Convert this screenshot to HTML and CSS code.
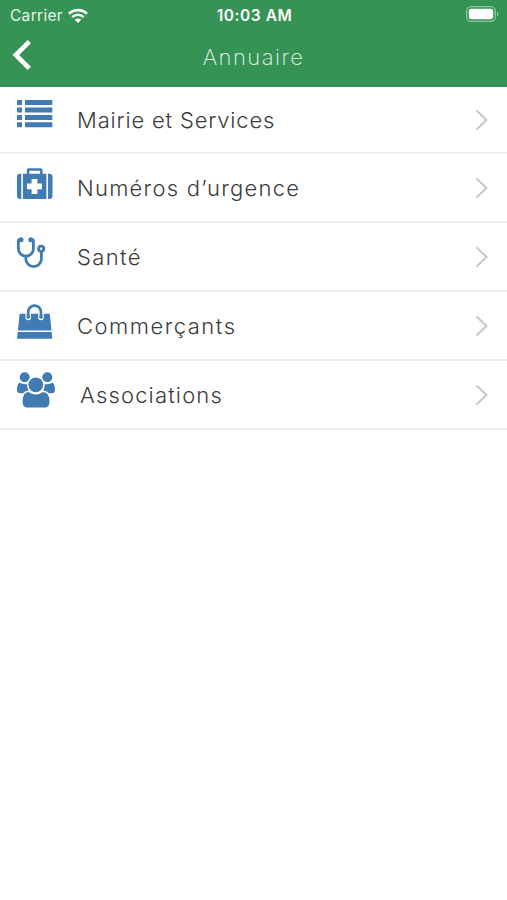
FILE: index.html
```html
<!DOCTYPE html>
<html lang="fr">
<head>
  <meta charset="UTF-8" />
  <meta name="viewport" content="width=device-width, initial-scale=1.0" />
  <title>Annuaire</title>
  <link rel="stylesheet" href="styles.css">
</head>
<body>
  <header>
    <div class="status">
      <div class="carrier">
        <span>Carrier</span>
        <svg class="wifi" width="20" height="15" viewBox="0 0 20 15" fill="none" stroke="#fff" stroke-width="2.6">
          <path d="M1 5.7a13 13 0 0 1 18 0"/>
          <path d="M4.3 9.1a8.2 8.2 0 0 1 11.4 0"/>
          <path d="M10 14.9l-3.2-3.2a4.6 4.6 0 0 1 6.4 0z" fill="#fff" stroke="none"/>
        </svg>
      </div>
      <div class="time">10:03 AM</div>
      <svg class="battery" width="33" height="16" viewBox="0 0 33 16">
        <rect x=".7" y=".7" width="28.6" height="14.6" rx="4.5" fill="none" stroke="#8fc6a1" stroke-width="1.3"/>
        <rect x="2.8" y="2.8" width="24.4" height="10.4" rx="2.4" fill="#fff"/>
        <path d="M31 5.6v4.8a2.7 2.7 0 0 0 0-4.8z" fill="#8fc6a1"/>
      </svg>
    </div>
    <nav>
      <a class="back" href="#">
        <svg width="20" height="30" viewBox="0 0 20 30" fill="none" stroke="#fff" stroke-width="4.6">
          <path d="M17.3 1.7L3.8 15l13.5 13.3"/>
        </svg>
      </a>
      <h1>Annuaire</h1>
    </nav>
  </header>

  <ul class="list">
    <li>
      <svg class="icon" viewBox="0 0 40 40">
        <path d="M1 3h5v5H1zM9 3h27.3v5H9zM1 10.4h5v5H1zM9 10.4h27.3v5H9zM1 17.9h5v5H1zM9 17.9h27.3v5H9zM1 25.3h5v5H1zM9 25.3h27.3v5H9z"/>
      </svg>
      <span class="label mairie">Mairie et Services</span>
      <svg class="chevron" viewBox="0 0 14 22"><path d="M1.500 1.500L11.500 11l-10 9.500"/></svg>
    </li>
    <li>
      <svg class="icon" viewBox="0 0 40 40">
        <path d="M5.3 7.700v25.200H4a3 3 0 0 1-3-3V10.700a3 3 0 0 1 3-3zM32 7.700h1.500a3 3 0 0 1 3 3v19.200a3 3 0 0 1-3 3H32z"/>
        <path fill-rule="evenodd" d="M6.900 7.700h3.900V4.300a2 2 0 0 1 2-2h11.800a2 2 0 0 1 2 2v3.400h3.800v25.200H6.900zM13.300 4.800v2.900h10.800V4.800zM15.600 13v4.600H11v5.600h4.600V28h5.800v-4.800H26v-5.600h-4.600V13z"/>
      </svg>
      <span class="label urgence">Numéros d’urgence</span>
      <svg class="chevron" viewBox="0 0 14 22"><path d="M1.500 1.500L11.500 11l-10 9.500"/></svg>
    </li>
    <li>
      <svg class="icon" viewBox="0 0 40 40">
        <g class="line">
          <path d="M4.700 4.400H4a1.600 1.600 0 0 0-1.600 1.600v7.700a7.500 7.500 0 0 0 15 0V6a1.600 1.600 0 0 0-1.600-1.600h-.9"/>
          <path d="M9.800 21.200v2.600a7.800 7.800 0 0 0 15.600 0v-6.900"/>
          <circle cx="25.200" cy="13.700" r="2.600"/>
        </g>
        <circle cx="5" cy="4.700" r="2.500"/>
        <circle cx="14.800" cy="4.700" r="2.500"/>
      </svg>
      <span class="label sante">Santé</span>
      <svg class="chevron" viewBox="0 0 14 22"><path d="M1.500 1.500L11.500 11l-10 9.500"/></svg>
    </li>
    <li>
      <svg class="icon" viewBox="0 0 40 40">
        <path d="M3.600 9.800h30.200l1.700 16.700H1.900zM1.800 27.900h33.800l.8 6.900H1z"/>
        <path class="gap" d="M12.200 13.500V8a6.400 6.400 0 0 1 12.800 0v5.500"/>
        <path class="line" d="M12.200 13V8a6.400 6.400 0 0 1 12.800 0v5"/>
        <circle cx="12.200" cy="13" r="1.800"/>
        <circle cx="25" cy="13" r="1.800"/>
      </svg>
      <span class="label commerce">Commerçants</span>
      <svg class="chevron" viewBox="0 0 14 22"><path d="M1.500 1.500L11.500 11l-10 9.500"/></svg>
    </li>
    <li>
      <svg class="icon" viewBox="0 0 40 40">
        <circle cx="8.700" cy="4.300" r="5"/>
        <circle cx="31.300" cy="4.300" r="5"/>
        <path d="M4 9.800c3 1.700 6 1.700 7.700.9-.5 3.600.3 6.200 2.300 8.300-2.200.2-4.200.7-5.700 1.300H4.500C2.200 20.300 1 19.200 1 17c0-3 .5-6.700 3-7.200zM36 9.800c-3 1.700-6 1.700-7.700.9.5 3.600-.3 6.200-2.300 8.300 2.200.2 4.200.7 5.700 1.300h3.800c2.300 0 3.500-1.100 3.500-3.300 0-3-.5-6.700-3-7.200z"/>
        <path class="edge" d="M12.500 18.300c4.500 3.200 10 3.200 14.500 0 5 0 7.200 4.600 7.200 10.700 0 4.200-2.100 6.300-5.600 6.300H11.500c-3.600 0-5.600-2.100-5.600-6.300 0-6.100 2-10.700 6.600-10.700z"/>
        <circle class="edge" cx="19.800" cy="11.800" r="8.100"/>
      </svg>
      <span class="label assoc">Associations</span>
      <svg class="chevron" viewBox="0 0 14 22"><path d="M1.500 1.500L11.500 11l-10 9.500"/></svg>
    </li>
  </ul>
</body>
</html>
```
FILE: styles.css
```css
* {
  box-sizing: border-box;
  margin: 0;
  padding: 0;
}
body {
  background: #fff;
  color: #3c3c3c;
  font-family: Inter, "Open Sans", sans-serif;
}
header {
  height: 87px;
  background: #359355;
  color: #fff;
}
.status {
  display: grid;
  grid-template-columns: 1fr auto 1fr;
  align-items: center;
  height: 30px;
  padding: 0 8px 0 10px;
}
.carrier {
  display: flex;
  align-items: center;
  gap: 5px;
  font-size: 15.5px;
  letter-spacing: 0.3px;
  color: #e4f5e8;
}
.wifi {
  display: block;
}
.time {
  font-size: 15.5px;
  font-weight: 600;
  letter-spacing: 0.55px;
}
.battery {
  justify-self: end;
  margin-bottom: 2px;
}
nav {
  display: grid;
  grid-template-columns: 60px 1fr 60px;
  align-items: center;
  height: 53px;
}
.back {
  display: flex;
  padding: 0 0 4px 12px;
}
nav h1 {
  text-align: center;
  font-size: 22px;
  font-weight: 200;
  letter-spacing: 1.5px;
  color: #e4f5e8;
}

.list {
  list-style: none;
}
.list li {
  display: flex;
  align-items: center;
  height: 69px;
  padding: 0 18px 0 16px;
  border-bottom: 2px solid #ececec;
}
.list li:first-child {
  height: 67px;
}
.icon {
  width: 40px;
  height: 40px;
  margin-top: -4px;
  flex: none;
  overflow: visible;
  fill: #407cb3;
}
.list li:first-child .icon {
  margin-top: -6px;
}
.icon .line {
  fill: none;
  stroke: #407cb3;
  stroke-width: 2.8;
  stroke-linecap: round;
}
.icon .gap {
  fill: none;
  stroke: #fff;
  stroke-width: 5.5;
  stroke-linecap: round;
}
.icon .edge {
  stroke: #fff;
  stroke-width: 1.4;
}
.label {
  flex: 1;
  margin-left: 21px;
  font-size: 22px;
  font-weight: 300;
  white-space: nowrap;
}
.mairie {
  letter-spacing: 0.82px;
}
.urgence {
  letter-spacing: 1.25px;
}
.sante {
  letter-spacing: 1.35px;
}
.commerce {
  letter-spacing: 1.5px;
}
.assoc {
  margin-left: 24px;
  letter-spacing: 1.15px;
}
.chevron {
  width: 14px;
  height: 22px;
  flex: none;
  fill: none;
  stroke: #c8c8c8;
  stroke-width: 2;
}
```
